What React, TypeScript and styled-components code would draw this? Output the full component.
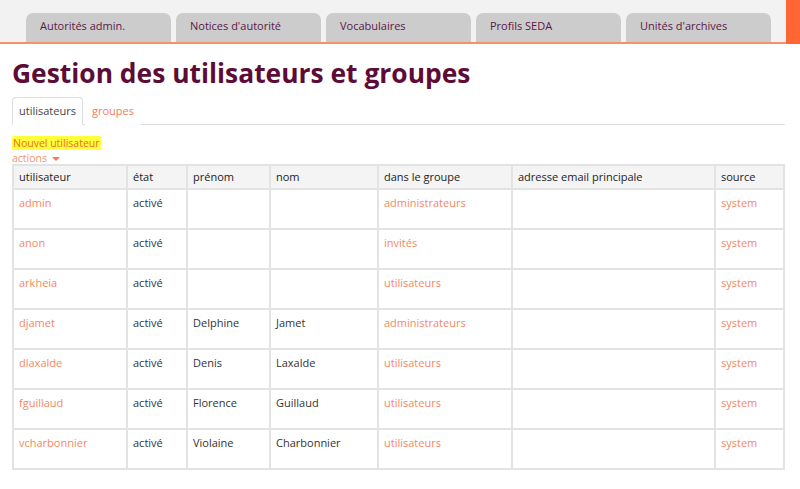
import styled, { createGlobalStyle } from 'styled-components';

const GlobalStyle = createGlobalStyle`
  body {
    margin: 0;
    background: #ffffff;
    font-family: 'Open Sans', 'Noto Sans', sans-serif;
    color: #333333;
  }
`;

const TopBar = styled.div`
  display: flex;
  align-items: flex-end;
  height: 42px;
  background: #f2f2f2;
  border-bottom: 2px solid #f4916c;
`;

const TopTabs = styled.nav`
  display: flex;
  gap: 5px;
  padding-left: 26px;
  flex: 1;
`;

const TopTab = styled.a`
  box-sizing: border-box;
  width: 145px;
  height: 29px;
  padding: 6px 0 0 14px;
  background: #cccccc;
  border-radius: 7px 7px 0 0;
  color: #5a1848;
  font-size: 11px;
  line-height: 14px;
  text-decoration: none;
`;

const Corner = styled.div`
  width: 14px;
  height: 44px;
  margin-bottom: -2px;
  background: #ff6633;
`;

const Content = styled.main`
  padding: 0 15px 0 12px;
`;

const Title = styled.h1`
  margin: 12px 0 7px;
  font-size: 26.4px;
  line-height: 34px;
  font-weight: 700;
  color: #5c0c36;
`;

const SubTabs = styled.div`
  display: flex;
  align-items: flex-end;
  border-bottom: 1px solid #dddddd;
`;

const SubTab = styled.a<{ $active?: boolean }>`
  box-sizing: border-box;
  height: 28px;
  padding: 6px 6px 0;
  margin-right: 2px;
  margin-bottom: -1px;
  font-size: 11px;
  line-height: 14px;
  text-decoration: none;
  color: ${(p) => (p.$active ? '#444444' : '#f47c5a')};
  background: #ffffff;
  border: 1px solid ${(p) => (p.$active ? '#dddddd' : 'transparent')};
  border-bottom-color: ${(p) => (p.$active ? '#ffffff' : 'transparent')};
  border-radius: 4px 4px 0 0;
`;

const NewUser = styled.a`
  display: inline-block;
  margin-top: 11px;
  padding: 0 1px;
  background: #ffff3c;
  border-radius: 2px;
  color: #f26b22;
  font-size: 10.5px;
  line-height: 14px;
  text-decoration: none;
`;

const Actions = styled.div`
  display: flex;
  align-items: center;
  gap: 5px;
  margin-top: 1px;
  color: #f5926c;
  font-size: 10.5px;
  line-height: 11px;
`;

const Caret = styled.span`
  width: 0;
  height: 0;
  border-left: 4px solid transparent;
  border-right: 4px solid transparent;
  border-top: 4px solid #f5795a;
  margin-top: 1px;
`;

const Table = styled.table`
  width: 771px;
  table-layout: fixed;
  border-collapse: collapse;
  border: 2px solid #e3e3e3;
  font-size: 11px;
  line-height: 16px;
`;

const Th = styled.th`
  height: 24px;
  padding: 3px 6px 3px 5px;
  box-sizing: border-box;
  text-align: left;
  font-weight: 400;
  color: #222222;
  background: #f4f4f4;
  border: 2px solid #e3e3e3;
`;

const Td = styled.td<{ $link?: boolean }>`
  height: 40px;
  box-sizing: border-box;
  padding: 5px 6px 5px 5px;
  vertical-align: top;
  color: ${(p) => (p.$link ? '#f58762' : '#333333')};
  border: 2px solid #e3e3e3;
`;

const columns = [
  { label: 'utilisateur', width: 114 },
  { label: 'état', width: 60 },
  { label: 'prénom', width: 83 },
  { label: 'nom', width: 108 },
  { label: 'dans le groupe', width: 134 },
  { label: 'adresse email principale', width: 203 },
  { label: 'source', width: 69 },
];

const users = [
  { login: 'admin', firstName: '', lastName: '', group: 'administrateurs' },
  { login: 'anon', firstName: '', lastName: '', group: 'invités' },
  { login: 'arkheia', firstName: '', lastName: '', group: 'utilisateurs' },
  { login: 'djamet', firstName: 'Delphine', lastName: 'Jamet', group: 'administrateurs' },
  { login: 'dlaxalde', firstName: 'Denis', lastName: 'Laxalde', group: 'utilisateurs' },
  { login: 'fguillaud', firstName: 'Florence', lastName: 'Guillaud', group: 'utilisateurs' },
  { login: 'vcharbonnier', firstName: 'Violaine', lastName: 'Charbonnier', group: 'utilisateurs' },
];

const topTabs = ['Autorités admin.', "Notices d'autorité", 'Vocabulaires', 'Profils SEDA', "Unités d'archives"];

function App() {
  return (
    <>
      <GlobalStyle />
      <TopBar>
        <TopTabs>
          {topTabs.map((tab) => (
            <TopTab key={tab}>{tab}</TopTab>
          ))}
        </TopTabs>
        <Corner />
      </TopBar>
      <Content>
        <Title>Gestion des utilisateurs et groupes</Title>
        <SubTabs>
          <SubTab $active>utilisateurs</SubTab>
          <SubTab>groupes</SubTab>
        </SubTabs>
        <NewUser>Nouvel utilisateur</NewUser>
        <Actions>
          actions <Caret />
        </Actions>
        <Table>
          <colgroup>
            {columns.map((col) => (
              <col key={col.label} style={{ width: col.width }} />
            ))}
          </colgroup>
          <thead>
            <tr>
              {columns.map((col) => (
                <Th key={col.label}>{col.label}</Th>
              ))}
            </tr>
          </thead>
          <tbody>
            {users.map((user) => (
              <tr key={user.login}>
                <Td $link>{user.login}</Td>
                <Td>activé</Td>
                <Td>{user.firstName}</Td>
                <Td>{user.lastName}</Td>
                <Td $link>{user.group}</Td>
                <Td></Td>
                <Td $link>system</Td>
              </tr>
            ))}
          </tbody>
        </Table>
      </Content>
    </>
  );
}

export default App;
